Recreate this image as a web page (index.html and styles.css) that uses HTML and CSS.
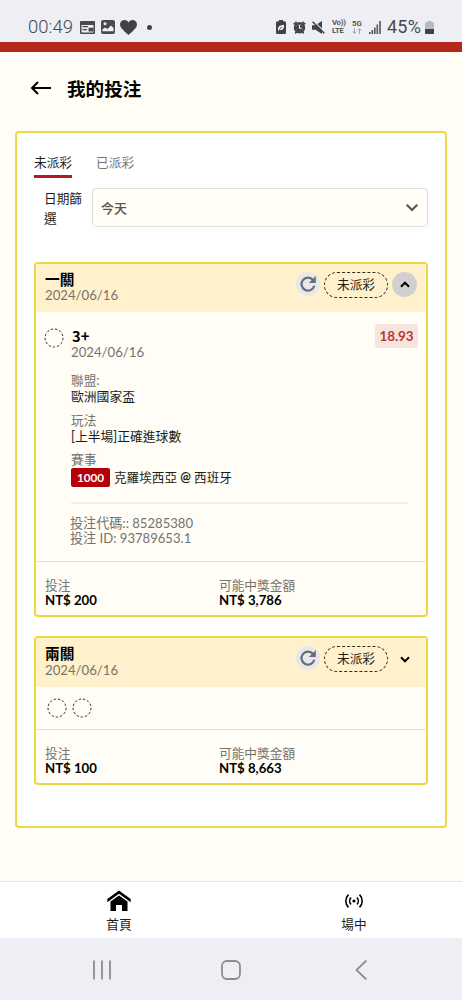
FILE: index.html
```html
<!DOCTYPE html>
<html lang="zh-Hant">
<head>
<meta charset="utf-8">
<title>我的投注</title>
<link rel="stylesheet" href="styles.css">
</head>
<body>
<div class="status">
  <div class="status-left">
    <span class="clock">00:49</span>
    <svg class="i-news" width="15" height="13" viewBox="0 0 15 13"><path fill="#484a4f" fill-rule="evenodd" d="M1 0h13q1 0 1 1v11q0 1-1 1H1q-1 0-1-1V1q0-1 1-1zM1.500 4v7.500h12V4z"/><path fill="#484a4f" d="M2.500 5h5.500v1.300H2.500zM2.500 8h4.500v1.200H2.500zM8.500 6.800h5v3.700h-5z"/></svg>
    <svg class="i-pic" width="14" height="14" viewBox="0 0 14 14"><path fill="#484a4f" fill-rule="evenodd" d="M2 0h10q2 0 2 2v10q0 2-2 2H2q-2 0-2-2V2q0-2 2-2zM1.400 9.500v1.800h11.200V8L10 5.500 6.500 9 4 7.500zM4 2.300a1.500 1.500 0 1 0 .1 0z"/></svg>
    <svg class="i-heart" width="17" height="15" viewBox="0 0 17 15"><path fill="#404247" d="M8.500 15C5 11.500 0 8.500 0 4.300 0 0 6-1.600 8.500 2.400 11-1.600 17 0 17 4.300 17 8.500 12 11.500 8.500 15z"/></svg>
    <span class="dot"></span>
  </div>
  <div class="status-right">
    <svg width="10" height="14" viewBox="0 0 10 14"><path fill="#404247" d="M3 0h4v1.200h1.500q1.500 0 1.500 1.500v9.800q0 1.500-1.500 1.500h-7Q0 14 0 12.500V2.700q0-1.500 1.500-1.500H3z"/><path fill="#eeeff4" d="M2 10.500C1.500 6 4.500 5 8 4.700 8.500 9 6 11 3.500 9.700L2.400 11z"/><path d="M3.200 9.700 6 7" stroke="#404247" stroke-width=".8"/></svg>
    <svg class="i-alarm" width="13" height="13" viewBox="0 0 13 13"><circle cx="6.500" cy="6.800" r="4.600" fill="none" stroke="#404247" stroke-width="2.200"/><circle cx="6.500" cy="6.800" r="3.600" fill="#404247"/><path d="M.6 3.300 3.600.8M12.400 3.300 9.400.8M2.200 12.400l1.500-1.500M10.800 12.400l-1.500-1.500" stroke="#404247" stroke-width="1.500"/><path d="M6.500 4v3.200h2.400" fill="none" stroke="#eeeff4" stroke-width="1.100"/></svg>
    <svg class="i-mute" width="13" height="13" viewBox="0 0 13 13"><path fill="#404247" d="M0 4.300h3.500L10 0v13L3.500 8.700H0z"/><path d="M1.600 0 13 11.400" stroke="#eeeff4" stroke-width="1.200"/><path d="M.6.7 12.300 12.300" stroke="#404247" stroke-width="1.500"/></svg>
    <span class="net lte"><span>Vo))</span><span>LTE</span></span>
    <span class="net five"><span>5G</span><svg width="10" height="6" viewBox="0 0 10 6"><path d="M2.500 0v5M.7 3.500l1.800 1.800 1.800-1.800M7.500 6V1M5.700 2.500 7.500.7l1.800 1.800" fill="none" stroke="#999ba0" stroke-width=".9"/></svg></span>
    <svg class="i-signal" width="12" height="13" viewBox="0 0 12 13"><path fill="#54565b" d="M0 11h1.600v2H0zM2.500 9h1.600v4H2.500zM5 6.500h1.600V13H5zM7.500 3.500h1.600V13H7.500zM10.200 0h1.600v13h-1.600z"/></svg>
    <span class="percent">45%</span>
    <svg width="9" height="13" viewBox="0 0 9 13"><path fill="#b9babd" d="M2.500 0h4v1.300H8q1 0 1 1V8H0V2.300q0-1 1-1h1.500z"/><path fill="#404247" d="M0 8h9v4q0 1-1 1H1q-1 0-1-1z"/></svg>
  </div>
</div>
<div class="brand-bar"></div>
<main class="page">
  <header class="title-row">
    <svg width="22" height="16" viewBox="0 0 22 16"><path d="M21 7H2M8 1 2 7l6 6" fill="none" stroke="#000" stroke-width="2"/></svg>
    <h1>我的投注</h1>
  </header>
  <section class="panel">
    <nav class="tabs"><span class="tab active">未派彩</span><span class="tab">已派彩</span></nav>
    <div class="filter">
      <label>日期篩選</label>
      <div class="select"><span>今天</span><svg width="12" height="8" viewBox="0 0 12 8"><path d="M1.300 1.300 6 6l4.700-4.700" fill="none" stroke="#5c5650" stroke-width="2.200" stroke-linecap="round"/></svg></div>
    </div>
    <article class="bet">
      <div class="bet-head">
        <div class="bet-name"><h2>一關</h2><time>2024/06/16</time></div>
        <span class="refresh"><svg width="18" height="18" viewBox="0 0 18 18"><path d="M15.300 10.800A6.500 6.500 0 1 1 14 5" fill="none" stroke="#686d7b" stroke-width="2.200"/><path fill="#686d7b" d="M16.800 1v7h-7z"/></svg></span>
        <span class="pill">未派彩</span>
        <span class="toggle open"><svg width="10" height="7" viewBox="0 0 10 7"><path d="M1 5.700 5 1.700l4 4" fill="none" stroke="#000" stroke-width="2"/></svg></span>
      </div>
      <div class="bet-body">
        <svg class="ring" width="20" height="20" viewBox="0 0 20 20"><circle cx="10" cy="10" r="9"/></svg>
        <div class="details">
          <div class="pick"><div><strong>3+</strong><time>2024/06/16</time></div><span class="odds">18.93</span></div>
          <dl>
            <dt>聯盟:</dt><dd>歐洲國家盃</dd>
            <dt>玩法</dt><dd>[上半場]正確進球數</dd>
            <dt>賽事</dt><dd class="match"><span class="badge">1000</span><span>克羅埃西亞 <b>@</b> 西班牙</span></dd>
          </dl>
          <div class="codes"><p>投注代碼:: 85285380</p><p>投注 ID: 93789653.1</p></div>
        </div>
      </div>
      <div class="bet-foot">
        <div><p>投注</p><b>NT$ 200</b></div><div><p>可能中獎金額</p><b>NT$ 3,786</b></div>
      </div>
    </article>
    <article class="bet collapsed">
      <div class="bet-head">
        <div class="bet-name"><h2>兩關</h2><time>2024/06/16</time></div>
        <span class="refresh"><svg width="18" height="18" viewBox="0 0 18 18"><path d="M15.300 10.800A6.500 6.500 0 1 1 14 5" fill="none" stroke="#686d7b" stroke-width="2.200"/><path fill="#686d7b" d="M16.800 1v7h-7z"/></svg></span>
        <span class="pill">未派彩</span>
        <span class="toggle"><svg width="10" height="7" viewBox="0 0 10 7"><path d="M1 1.300 5 5.300l4-4" fill="none" stroke="#000" stroke-width="2"/></svg></span>
      </div>
      <div class="rings">
        <svg class="ring" width="20" height="20" viewBox="0 0 20 20"><circle cx="10" cy="10" r="9"/></svg>
        <svg class="ring" width="20" height="20" viewBox="0 0 20 20"><circle cx="10" cy="10" r="9"/></svg>
      </div>
      <div class="bet-foot">
        <div><p>投注</p><b>NT$ 100</b></div><div><p>可能中獎金額</p><b>NT$ 8,663</b></div>
      </div>
    </article>
  </section>
</main>
<nav class="bottom">
  <div class="item home"><svg width="24" height="22" viewBox="0 0 24 22"><path fill="#000" d="M12 .5 23.700 9v3.200L12 3.800.3 12.200V9z"/><path fill="#000" d="M12 5.600 20.500 11.500V21H15v-6H9v6H3.500v-9.500z"/></svg><span>首頁</span></div>
  <div class="item live"><svg width="20" height="22" viewBox="0 0 20 22"><circle cx="10" cy="11" r="1.600" fill="#000"/><path d="M7 7.600a5 5 0 0 0 0 6.800M13 7.600a5 5 0 0 1 0 6.800M4.500 4.600a9 9 0 0 0 0 12.800M15.500 4.600a9 9 0 0 1 0 12.800" fill="none" stroke="#000" stroke-width="1.600"/></svg><span>場中</span></div>
</nav>
<div class="system">
  <svg width="20" height="20" viewBox="0 0 20 20"><path d="M2 .5v19M10 .5v19M18 .5v19" stroke="#8c8d92" stroke-width="1.800"/></svg>
  <svg width="20" height="20" viewBox="0 0 20 20"><rect x="1" y="1" width="18" height="18" rx="5" fill="none" stroke="#8c8d92" stroke-width="1.800"/></svg>
  <svg width="12" height="20" viewBox="0 0 12 20"><path d="M11.300.5 1.500 10l9.800 9.500" fill="none" stroke="#8c8d92" stroke-width="1.800"/></svg>
</div>
</body>
</html>
```
FILE: styles.css
```css
* { box-sizing: border-box; }
body, h1, h2, p, dl, dd { margin: 0; }
body {
  width: 462px;
  height: 1000px;
  display: flex;
  flex-direction: column;
  overflow: hidden;
  background: #fffdf4;
  color: #1d1c19;
  font-family: Lato, "Noto Sans CJK TC", sans-serif;
  font-size: 12.7px;
  line-height: 16px;
  white-space: nowrap;
}
svg { display: block; flex: none; }

.status {
  height: 42px;
  padding: 12px 28px 0 28px;
  display: flex;
  justify-content: space-between;
  background: #eeeff4;
  color: #484a4f;
  font-family: Roboto, sans-serif;
}
.status-left, .status-right { display: flex; align-items: center; height: 30px; }
.clock { width: 45px; font-size: 18.5px; font-weight: 300; }
.i-news { margin-left: 7px; }
.i-pic { margin-left: 6px; }
.i-heart { margin-left: 5px; }
.dot { width: 5px; height: 5px; margin-left: 10px; border-radius: 50%; background: #404247; }
.i-alarm { margin-left: 7px; }
.i-mute { margin-left: 6px; }
.net { font-size: 7.8px; line-height: 8px; font-weight: 600; }
.net span { display: block; }
.lte { width: 14px; margin-left: 7px; letter-spacing: -.3px; }
.five { width: 11px; margin-left: 6px; }
.i-signal { margin-left: 6px; }
.percent { width: 36px; margin: 0 2px 0 6px; font-size: 18px; font-weight: 400; letter-spacing: .2px; }
.brand-bar { height: 10px; background: #b5271b; }

.page { height: 829px; padding: 0 15px; }
.title-row { display: flex; align-items: center; height: 79px; padding: 0 0 6px 15px; }
.title-row h1 { margin-left: 15px; color: #000; font-size: 18.6px; line-height: 28px; font-weight: 700; }
.panel { height: 697px; padding: 20px 17px 0; border: 2px solid #ebd84d; border-radius: 4px; background: #fff; }
.tabs { display: flex; gap: 24px; }
.tab { height: 25px; line-height: 19px; color: #75736e; }
.tab.active { border-bottom: 3px solid #b51924; color: #1d1c19; }
.filter { display: flex; margin: 10px 0 35px; }
.filter label { width: 52px; height: 39px; padding: 0 0 0 10px; margin-right: 6px; line-height: 20px; white-space: normal; }
.select {
  display: flex;
  flex: 1;
  align-items: center;
  justify-content: space-between;
  height: 39px;
  padding: 0 9px 0 8px;
  border: 1px solid #e2e2db;
  border-radius: 4px;
  background: #fffdf6;
  color: #5c5650;
  font-size: 13px;
  font-weight: 500;
}

.bet { margin-bottom: 19px; border: 2px solid #ecd840; border-radius: 4px; background: #fffdf5; }
.bet-head { display: flex; height: 48px; padding: 7px 9px 0; background: #fff1cb; }
.bet-name { flex: 1; }
.bet-name h2 { height: 17px; color: #000; font-size: 14.7px; line-height: 17px; font-weight: 700; }
time { display: block; color: #75736e; font-size: 13.2px; line-height: 15px; }
.refresh { display: flex; align-items: center; justify-content: center; width: 24px; height: 24px; margin: 1px 4px 0 0; border-radius: 50%; background: #e9e8e8; }
.pill { width: 64px; height: 26px; margin-top: 1px; border: 1px dashed #302b20; border-radius: 13px; line-height: 23px; text-align: center; }
.toggle { display: flex; align-items: center; justify-content: center; width: 25px; height: 25px; margin: 1px 0 0 4px; border-radius: 50%; }
.toggle.open { background: #d0d0d0; }
.collapsed .bet-head { height: 49px; }
.collapsed h2 { height: 18px; }
.collapsed .toggle { margin-top: 2px; }
.bet-body { display: flex; height: 249px; padding: 16px 8px 0; }
.ring { fill: none; stroke: #36332f; stroke-width: 1; stroke-dasharray: 2.500 1.800; }
.details { flex: 1; padding-left: 7px; }
.pick { display: flex; justify-content: space-between; height: 44px; }
.pick strong { display: block; padding-left: 1px; color: #000; font-family: "Noto Sans CJK TC", sans-serif; font-size: 14.7px; line-height: 16px; }
.pick time { margin-top: 1px; }
.odds { width: 43px; height: 24px; margin-top: -4px; border-radius: 3px; background: #f7e4df; color: #b53a2d; font-size: 13.4px; font-weight: 700; line-height: 25px; text-align: center; }
dl { width: 337px; height: 132px; border-bottom: 2px solid #f0efe9; }
dt { height: 16px; line-height: 17px; color: #75736e; }
dd { height: 23.500px; font-size: 12.8px; line-height: 16px; }
.match { display: flex; gap: 4px; font-size: 12.6px; line-height: 21px; }
.badge { width: 39px; height: 19px; margin-top: 1px; border-radius: 2px; background: #b30009; color: #fff; font-size: 11.7px; line-height: 19px; font-weight: 700; text-align: center; }
.codes { margin: 12px 0 0 -1px; color: #75736e; font-size: 13.1px; line-height: 15px; }
.bet-foot { display: grid; grid-template-columns: 174px 1fr; height: 54px; padding: 16px 9px 0; border-top: 1px solid #e6e2da; }
.bet-foot p { color: #75736e; line-height: 15px; }
.bet-foot b { display: block; color: #000; font-size: 13.2px; line-height: 14px; }
.rings { display: flex; gap: 5px; height: 42px; padding: 11px 11px 0; }

.bottom { display: grid; grid-template-columns: 238px 1fr; height: 57px; border-top: 1px solid #e5e5e8; background: #fff; }
.item { display: flex; flex-direction: column; align-items: center; padding-top: 8px; }
.item span { margin-top: 4px; }
.live { margin-left: 8px; }
.system { display: flex; gap: 109px; height: 62px; padding: 22px 0 0 92px; background: #eeeff4; }
.system svg:last-child { margin-left: 5px; }
```
